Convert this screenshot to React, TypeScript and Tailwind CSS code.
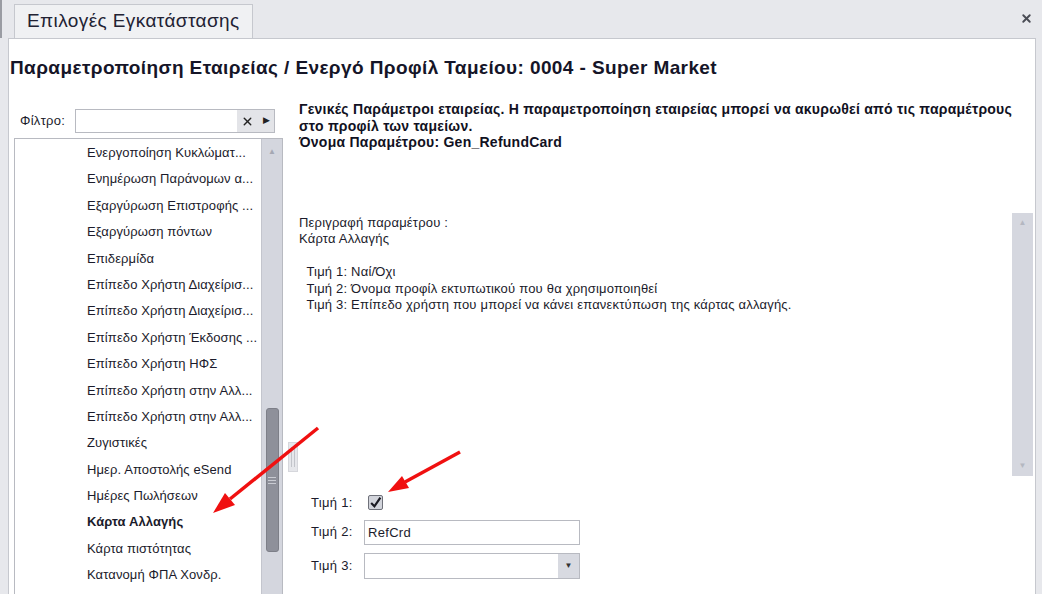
import { X } from 'lucide-react';

const items = [
  'Ενεργοποίηση Κυκλώματ...',
  'Ενημέρωση Παράνομων α...',
  'Εξαργύρωση Επιστροφής ...',
  'Εξαργύρωση πόντων',
  'Επιδερμίδα',
  'Επίπεδο Χρήστη Διαχείρισ...',
  'Επίπεδο Χρήστη Διαχείρισ...',
  'Επίπεδο Χρήστη Έκδοσης ...',
  'Επίπεδο Χρήστη ΗΦΣ',
  'Επίπεδο Χρήστη στην Αλλ...',
  'Επίπεδο Χρήστη στην Αλλ...',
  'Ζυγιστικές',
  'Ημερ. Αποστολής eSend',
  'Ημέρες Πωλήσεων',
  'Κάρτα Αλλαγής',
  'Κάρτα πιστότητας',
  'Κατανομή ΦΠΑ Χονδρ.',
];

export default function App() {
  return (
    <div className="relative w-[1042px] h-[594px] overflow-hidden bg-[#e7e8ec] font-['Liberation_Sans',sans-serif] text-[#1b1b2b]">
      {/* Tab strip */}
      <div className="relative h-[38px] flex items-end pl-[12px] border-l-2 border-[#9a9ca3]">
        <div className="h-[34px] px-[12px] flex items-center border border-b-0 border-[#c6c8ce] bg-[#f0f1f3] text-[19px] tracking-[0.4px] text-[#222233]">
          Επιλογές Εγκατάστασης
        </div>
        <X className="absolute right-[9px] top-[12px] w-[13px] h-[13px] text-[#4a4c55]" strokeWidth={3.5} />
      </div>

      {/* Page */}
      <div className="ml-[8px] w-[1028px] h-[556px] bg-white border-t border-l border-r border-[#c6c8ce]">
        <h1 className="mt-[18px] ml-[1px] text-[19px] leading-[22px] tracking-[0.4px] font-bold text-[#151528] whitespace-nowrap">
          Παραμετροποίηση Εταιρείας / Ενεργό Προφίλ Ταμείου: 0004 - Super Market
        </h1>

        <div className="flex mt-[15px]">
          {/* Left panel */}
          <div className="w-[279px] shrink-0 pl-[5px] pt-[15px]">
            <div className="flex items-center h-[24px]">
              <span className="w-[61px] pl-[6px] text-[13px] tracking-[0.3px]">Φίλτρο:</span>
              <div className="flex w-[200px] h-[24px] border border-[#b8bac1] bg-white">
                <div className="flex-1" />
                <div className="w-[37px] flex items-center justify-between px-[4px] bg-[#e3e4e8] text-[#222]">
                  <X className="w-[13px] h-[13px]" strokeWidth={2.5} />
                  <span className="text-[9px]">▶</span>
                </div>
              </div>
            </div>

            <div className="flex mt-[5px] w-[269px] h-[460px] border border-[#b8bac1] bg-white">
              <div className="flex-1 overflow-hidden pt-[1px]">
                {items.map((t, i) => (
                  <div
                    key={i}
                    className={`h-[26.4px] leading-[26.4px] pl-[72px] text-[13px] tracking-[0.1px] whitespace-nowrap overflow-hidden ${
                      t === 'Κάρτα Αλλαγής' ? 'font-bold' : ''
                    }`}
                  >
                    {t}
                  </div>
                ))}
              </div>
              <div className="w-[21px] bg-[#d4d6de] border-l border-[#c3c5cd] flex flex-col items-center">
                <span className="mt-[7px] text-[8px] text-[#a5a8b3]">▲</span>
                <div className="mt-[250px] w-[13px] h-[144px] rounded-[3px] bg-[#8e909a] border border-[#7d7f88] flex flex-col items-center justify-center gap-[2px]">
                  <div className="w-[8px] h-[1px] bg-[#c9cbd2]" />
                  <div className="w-[8px] h-[1px] bg-[#c9cbd2]" />
                  <div className="w-[8px] h-[1px] bg-[#c9cbd2]" />
                </div>
              </div>
            </div>
          </div>

          {/* Splitter */}
          <div className="w-[11px] shrink-0 flex items-start">
            <div className="mt-[348px] w-[10px] h-[30px] bg-[#e6e7eb] border border-[#d6d7dc] flex justify-center gap-[2px] pt-[4px]">
              <div className="w-[1px] h-[20px] bg-[#c2c4ca]" />
              <div className="w-[1px] h-[20px] bg-[#c2c4ca]" />
            </div>
          </div>

          {/* Right panel */}
          <div className="flex-1 pt-[7px]">
            <div className="text-[14px] leading-[16.5px] tracking-[0.25px] font-bold whitespace-nowrap text-[#111122]">
              Γενικές Παράμετροι εταιρείας. Η παραμετροποίηση εταιρείας μπορεί να ακυρωθεί από τις παραμέτρους
              <br />
              στο προφίλ των ταμείων.
              <br />
              Όνομα Παραμέτρου: Gen_RefundCard
            </div>

            <div className="flex mt-[62px] h-[263px] pr-[2px]">
              <div className="flex-1 pt-[2px] text-[13px] leading-[16.5px] tracking-[0.2px] whitespace-pre text-[#1b1b2b]">
                {'Περιγραφή παραμέτρου :\nΚάρτα Αλλαγής\n\n  Τιμή 1: Ναί/Όχι\n  Τιμή 2: Όνομα προφίλ εκτυπωτικού που θα χρησιμοποιηθεί\n  Τιμή 3: Επίπεδο χρήστη που μπορεί να κάνει επανεκτύπωση της κάρτας αλλαγής.'}
              </div>
              <div className="w-[21px] bg-[#d5d7df] flex flex-col items-center justify-between py-[4px] text-[8px] text-[#b4b7c1]">
                <span>▲</span>
                <span>▼</span>
              </div>
            </div>

            <div className="mt-[15px] pl-[12px] text-[13px] tracking-[0.3px]">
              <div className="flex items-center h-[24px]">
                <span className="w-[53px]">Τιμή 1:</span>
                <div className="ml-[4px] w-[15px] h-[15px] rounded-[2px] border border-[#6f717a] bg-[#d2d4db] flex items-center justify-center">
                  <svg viewBox="0 0 12 12" className="w-[13px] h-[13px]">
                    <path d="M2 6.5 L5 9.5 L10.5 1.5" fill="none" stroke="#1a1a22" strokeWidth="2" />
                  </svg>
                </div>
              </div>
              <div className="flex items-center h-[25px] mt-[5px]">
                <span className="w-[53px]">Τιμή 2:</span>
                <div className="w-[216px] h-[25px] border border-[#b8bac1] bg-white pl-[3px] leading-[23px] text-[13px]">
                  RefCrd
                </div>
              </div>
              <div className="flex items-center h-[26px] mt-[8px]">
                <span className="w-[53px]">Τιμή 3:</span>
                <div className="flex w-[216px] h-[26px] border border-[#b8bac1] bg-white">
                  <div className="flex-1" />
                  <div className="w-[21px] bg-[#d8dae1] flex items-center justify-center text-[8px] text-[#333]">▼</div>
                </div>
              </div>
            </div>
          </div>
        </div>
      </div>

      {/* Annotation arrows */}
      <svg className="absolute inset-0 pointer-events-none" width="1042" height="594">
        <line x1="318" y1="428" x2="230" y2="499" stroke="#f01010" strokeWidth="3.5" />
        <polygon points="213,513 235,505 225,493" fill="#f01010" />
        <line x1="460" y1="452" x2="405" y2="482" stroke="#f01010" strokeWidth="3.5" />
        <polygon points="388,492 409,488 402,476" fill="#f01010" />
      </svg>
    </div>
  );
}
